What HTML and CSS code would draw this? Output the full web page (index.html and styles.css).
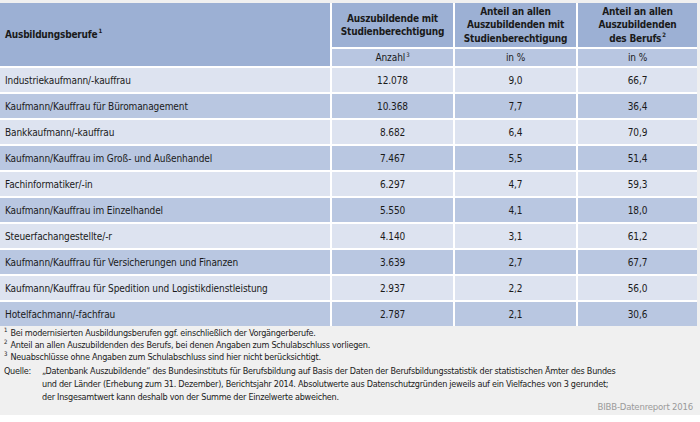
FILE: index.html
```html
<!DOCTYPE html>
<html lang="de">
<head>
<meta charset="utf-8">
<link rel="stylesheet" href="styles.css">
<title>Ausbildungsberufe</title>
</head>
<body>
<div class="panel">
  <div class="table">
    <div class="hcell h-first"><span>Ausbildungsberufe<sup>1</sup></span></div>
    <div class="hcell h-num"><span>Auszubildende mit<br>Studienberechtigung</span></div>
    <div class="hcell h-num"><span>Anteil an allen<br>Auszubildenden mit<br>Studienberechtigung</span></div>
    <div class="hcell h-num"><span>Anteil an allen<br>Auszubildenden<br>des Berufs<sup>2</sup></span></div>
    <div class="scell"><span>Anzahl<sup>3</sup></span></div>
    <div class="scell"><span>in %</span></div>
    <div class="scell"><span>in %</span></div>

    <div class="cell name light">Industriekaufmann/-kauffrau</div>
    <div class="cell num light">12.078</div>
    <div class="cell num light">9,0</div>
    <div class="cell num light">66,7</div>

    <div class="cell name dark">Kaufmann/Kauffrau für Büromanagement</div>
    <div class="cell num dark">10.368</div>
    <div class="cell num dark">7,7</div>
    <div class="cell num dark">36,4</div>

    <div class="cell name light">Bankkaufmann/-kauffrau</div>
    <div class="cell num light">8.682</div>
    <div class="cell num light">6,4</div>
    <div class="cell num light">70,9</div>

    <div class="cell name dark">Kaufmann/Kauffrau im Groß- und Außenhandel</div>
    <div class="cell num dark">7.467</div>
    <div class="cell num dark">5,5</div>
    <div class="cell num dark">51,4</div>

    <div class="cell name light">Fachinformatiker/-in</div>
    <div class="cell num light">6.297</div>
    <div class="cell num light">4,7</div>
    <div class="cell num light">59,3</div>

    <div class="cell name dark">Kaufmann/Kauffrau im Einzelhandel</div>
    <div class="cell num dark">5.550</div>
    <div class="cell num dark">4,1</div>
    <div class="cell num dark">18,0</div>

    <div class="cell name light">Steuerfachangestellte/-r</div>
    <div class="cell num light">4.140</div>
    <div class="cell num light">3,1</div>
    <div class="cell num light">61,2</div>

    <div class="cell name dark">Kaufmann/Kauffrau für Versicherungen und Finanzen</div>
    <div class="cell num dark">3.639</div>
    <div class="cell num dark">2,7</div>
    <div class="cell num dark">67,7</div>

    <div class="cell name light">Kaufmann/Kauffrau für Spedition und Logistikdienstleistung</div>
    <div class="cell num light">2.937</div>
    <div class="cell num light">2,2</div>
    <div class="cell num light">56,0</div>

    <div class="cell name dark">Hotelfachmann/-fachfrau</div>
    <div class="cell num dark">2.787</div>
    <div class="cell num dark">2,1</div>
    <div class="cell num dark">30,6</div>
  </div>

  <div class="notes">
    <p><sup>1</sup> Bei modernisierten Ausbildungsberufen ggf. einschließlich der Vorgängerberufe.</p>
    <p><sup>2</sup> Anteil an allen Auszubildenden des Berufs, bei denen Angaben zum Schulabschluss vorliegen.</p>
    <p><sup>3</sup> Neuabschlüsse ohne Angaben zum Schulabschluss sind hier nicht berücksichtigt.</p>
  </div>

  <div class="source">
    <span class="src-label">Quelle:</span>
    <span class="src-text">„Datenbank Auszubildende“ des Bundesinstituts für Berufsbildung auf Basis der Daten der Berufsbildungsstatistik der statistischen Ämter des Bundes<br>und der Länder (Erhebung zum 31. Dezember), Berichtsjahr 2014. Absolutwerte aus Datenschutzgründen jeweils auf ein Vielfaches von 3 gerundet;<br>der Insgesamtwert kann deshalb von der Summe der Einzelwerte abweichen.</span>
  </div>
  <div class="credit">BIBB-Datenreport 2016</div>
</div>
</body>
</html>
```

FILE: styles.css
```css
html, body {
  margin: 0;
  padding: 0;
  background: #ffffff;
}

body {
  font-family: "DejaVu Sans Condensed", "DejaVu Sans", sans-serif;
  font-stretch: condensed;
  color: #1a1a1a;
  width: 700px;
  height: 422px;
  overflow: hidden;
}

.panel {
  background: #f0f0f0;
  padding-top: 3px;
  height: 415px;
  box-sizing: border-box;
}

.table {
  width: 697px;
  display: grid;
  grid-template-columns: 330px 121px 121px 119px;
  grid-template-rows: 44px 17px repeat(10, 24px);
  gap: 2px;
  background: #ffffff;
  font-size: 10px;
  letter-spacing: -0.1px;
}

sup {
  font-size: 6px;
  line-height: 0;
  vertical-align: super;
  margin-left: 1px;
}

.hcell {
  background: #9cb0d4;
  font-weight: bold;
  line-height: 13.5px;
  letter-spacing: -0.2px;
  display: flex;
  align-items: center;
}

.h-first {
  grid-row: span 2;
  padding-left: 5px;
}

.h-num {
  justify-content: center;
  text-align: center;
}

.scell {
  background: #b8c6e1;
  display: flex;
  align-items: center;
  justify-content: center;
}

.cell {
  display: flex;
  align-items: center;
}

.name {
  padding-left: 5px;
}

.num {
  justify-content: center;
}

.light {
  background: #dde3f0;
}

.dark {
  background: #b9c7e1;
}

.notes {
  font-size: 9px;
  letter-spacing: -0.25px;
  line-height: 12px;
  padding: 1px 0 0 4px;
}

.notes p {
  margin: 0;
}

.notes sup {
  font-size: 6px;
  margin-left: 0;
  margin-right: 1px;
}

.source {
  display: flex;
  font-size: 9px;
  letter-spacing: -0.25px;
  line-height: 13px;
  padding: 2px 0 0 4px;
}

.src-label {
  width: 38px;
  flex: none;
}

.credit {
  font-size: 9.5px;
  letter-spacing: -0.2px;
  color: #9a9a9a;
  text-align: right;
  padding-right: 7px;
  line-height: 12px;
  margin-top: -3px;
}
```
